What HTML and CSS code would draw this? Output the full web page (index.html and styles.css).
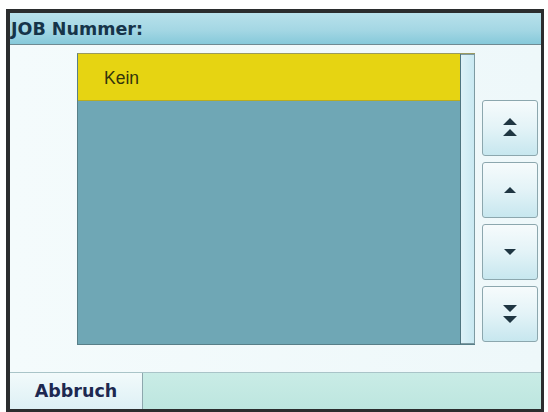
FILE: index.html
```html
<!DOCTYPE html>
<html>
<head>
<meta charset="utf-8">
<link rel="stylesheet" href="styles.css">
</head>
<body>
<div class="frame">
  <div class="title">JOB Nummer:</div>
  <div class="content">
    <div class="listbox">
      <div class="list">
        <div class="item selected">Kein</div>
      </div>
      <div class="scrollbar"></div>
    </div>
    <div class="buttons">
      <div class="btn">
        <svg width="16" height="20" viewBox="0 0 16 20"><path d="M8 0 L15 7 L1 7 Z M8 11 L15 18 L1 18 Z" fill="#1f3642"/></svg>
      </div>
      <div class="btn">
        <svg width="16" height="8" viewBox="0 0 16 8"><path d="M8 1 L14 7 L2 7 Z" fill="#1f3642"/></svg>
      </div>
      <div class="btn">
        <svg width="16" height="8" viewBox="0 0 16 8"><path d="M2 1 L14 1 L8 7 Z" fill="#1f3642"/></svg>
      </div>
      <div class="btn">
        <svg width="16" height="20" viewBox="0 0 16 20"><path d="M1 1 L15 1 L8 8 Z M1 12 L15 12 L8 19 Z" fill="#1f3642"/></svg>
      </div>
    </div>
  </div>
  <div class="footer">
    <div class="tab">Abbruch</div>
    <div class="bar"></div>
  </div>
</div>
</body>
</html>
```
FILE: styles.css
```css
html, body {
  margin: 0;
  padding: 0;
  background: #ffffff;
}
body {
  padding-top: 9px;
  padding-left: 6px;
}
.frame {
  width: 531px;
  height: 396px;
  border-style: solid;
  border-color: #2b2d2e;
  border-width: 4px 3px 3px 4px;
  display: flex;
  flex-direction: column;
  background: #eef8fa;
  font-family: "DejaVu Sans", sans-serif;
}
.title {
  height: 31px;
  border-bottom: 1px solid #6f8a92;
  background: linear-gradient(#b8e1eb, #a4d7e4 55%, #86c9da);
  color: #163449;
  font-weight: bold;
  font-size: 17.5px;
  line-height: 33px;
  padding-left: 1px;
}
.content {
  flex: 1;
  display: flex;
  padding: 8px 3px 0 67px;
  gap: 7px;
  background: linear-gradient(90deg, #f4fbfc, #eef8fa);
  border-bottom: 1px solid #a9c4c8;
}
.listbox {
  width: 397px;
  height: 290px;
  display: flex;
  border: 1px solid #587f88;
  border-right: none;
  border-top-color: #9a9a60;
}
.list {
  flex: 1;
  background: #6fa7b5;
  border-right: 1px solid #4f7580;
}
.item {
  height: 46px;
  line-height: 48px;
  padding-left: 26px;
  font-family: "Liberation Sans", Arial, sans-serif;
  font-size: 17.5px;
  color: #33340c;
}
.selected {
  background: #e6d412;
  border-bottom: 1px solid #b8ac20;
}
.scrollbar {
  width: 13px;
  background: linear-gradient(90deg, #ddf2f8, #c9e9f2);
  border: 1px solid #7d9aa2;
  border-left: none;
}
.buttons {
  width: 56px;
  display: flex;
  flex-direction: column;
  gap: 6px;
  padding-top: 47px;
}
.btn {
  height: 54px;
  border: 1px solid #8ca7ae;
  border-radius: 3px;
  background: linear-gradient(#f6fbfc, #e3f3f7 50%, #c7e7ef);
  display: flex;
  align-items: center;
  justify-content: center;
}
.footer {
  height: 36px;
  display: flex;
}
.tab {
  width: 132px;
  border-right: 1px solid #8da7ad;
  background: linear-gradient(#f2fafb, #ddf0f5);
  color: #1d2850;
  font-weight: bold;
  font-size: 17.5px;
  line-height: 36px;
  text-align: center;
}
.bar {
  flex: 1;
  background: linear-gradient(#c9ece6, #bde6df);
}
```
